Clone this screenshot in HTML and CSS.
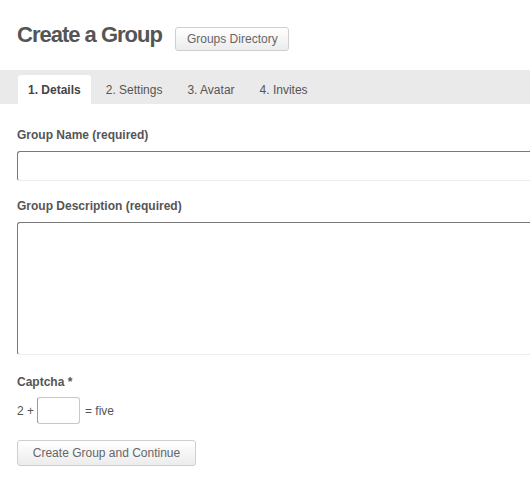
FILE: index.html
```html
<!DOCTYPE html>
<html>
<head>
<meta charset="utf-8">
<link rel="stylesheet" href="styles.css">
</head>
<body>
<div class="page">
  <header class="header">
    <h1 class="title">Create a Group</h1>
    <a class="btn btn-dir">Groups Directory</a>
  </header>
  <nav class="tabs">
    <span class="tab active">1. Details</span>
    <span class="tab">2. Settings</span>
    <span class="tab">3. Avatar</span>
    <span class="tab">4. Invites</span>
  </nav>
  <form class="form">
    <label class="label">Group Name (required)</label>
    <input class="field" type="text">
    <label class="label label-gap">Group Description (required)</label>
    <textarea class="field area"></textarea>
    <label class="label label-captcha">Captcha *</label>
    <div class="captcha">
      <span>2 +</span>
      <input class="captcha-input" type="text">
      <span>= five</span>
    </div>
    <button class="btn btn-submit" type="button">Create Group and Continue</button>
  </form>
</div>
</body>
</html>
```

FILE: styles.css
```css
html, body {
  margin: 0;
  padding: 0;
  background: #fff;
}
body {
  font-family: "Liberation Sans", Arial, sans-serif;
  color: #555;
  overflow: hidden;
}
.page {
  width: 530px;
}
.header {
  display: flex;
  align-items: flex-start;
  padding: 22px 17px 0;
  height: 48px;
}
.title {
  margin: 0;
  font-size: 22px;
  line-height: 26px;
  font-weight: bold;
  letter-spacing: -1px;
  color: #555;
}
.btn {
  display: inline-block;
  box-sizing: border-box;
  font-family: "Liberation Sans", Arial, sans-serif;
  font-size: 12px;
  color: #666;
  background: linear-gradient(#ffffff, #ececec);
  border: 1px solid #cfcfcf;
  border-radius: 3px;
}
.btn-dir {
  margin-left: 13px;
  margin-top: 5px;
  height: 24px;
  line-height: 22px;
  padding: 0 10px 0 11px;
}
.tabs {
  display: flex;
  background: #eaeaea;
  height: 34px;
  box-sizing: border-box;
  padding: 5px 18px 0;
  gap: 5px;
}
.tab {
  font-size: 12px;
  line-height: 13px;
  padding: 9px 10px 7px;
  color: #555;
}
.tab.active {
  background: #fff;
  font-weight: bold;
  color: #444;
  border-radius: 3px 3px 0 0;
}
.form {
  display: flex;
  flex-direction: column;
  align-items: flex-start;
  padding: 23px 0 0 17px;
}
.label {
  display: block;
  font-size: 12px;
  line-height: 16px;
  font-weight: bold;
  color: #555;
  margin-bottom: 8px;
}
.label-gap {
  margin-top: 17px;
}
.label-captcha {
  margin-top: 19px;
  margin-bottom: 7px;
}
.field {
  box-sizing: border-box;
  width: 513px;
  height: 30px;
  margin: 0;
  border: 1px solid #787878;
  border-right: none;
  border-bottom-color: #ececec;
  border-radius: 3px 0 0 3px;
  background: #fff;
  font-family: inherit;
}
.area {
  height: 133px;
  resize: none;
  display: block;
}
.captcha {
  display: flex;
  align-items: center;
  font-size: 12px;
  color: #555;
  height: 27px;
}
.captcha-input {
  box-sizing: border-box;
  width: 43px;
  height: 27px;
  margin: 0 5px 0 3px;
  border: 1px solid #c8c8c8;
  border-left-color: #9a9a9a;
  border-radius: 3px;
  background: #fff;
}
.btn-submit {
  margin-top: 16px;
  height: 26px;
  width: 179px;
  padding: 0;
  line-height: 24px;
  text-align: center;
}
```
